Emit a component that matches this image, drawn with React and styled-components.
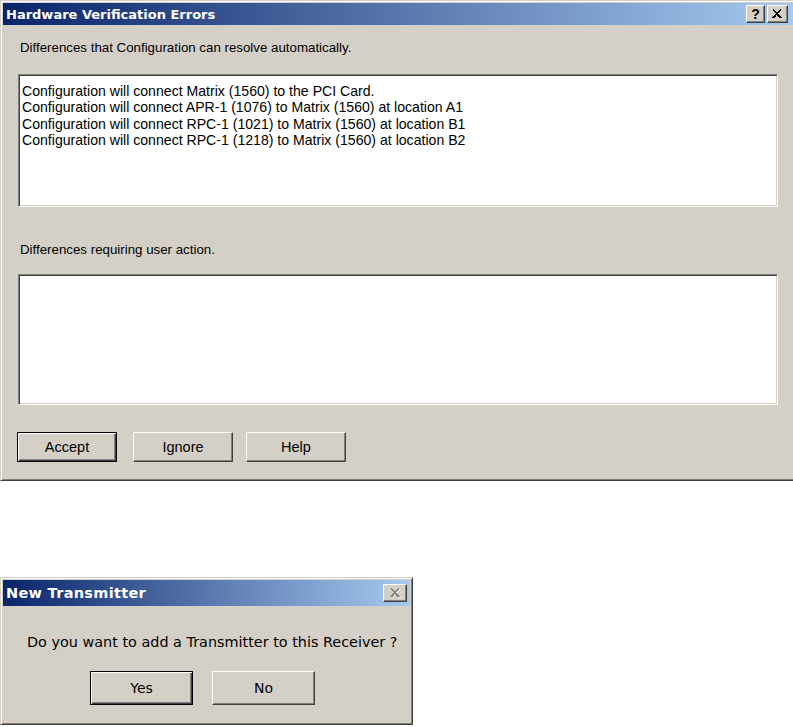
import React from "react";
import styled, { createGlobalStyle } from "styled-components";

const GlobalStyle = createGlobalStyle`
  html, body {
    margin: 0;
    padding: 0;
    background: #ffffff;
    overflow: hidden;
  }
  body {
    font-family: "Liberation Sans", Arial, sans-serif;
  }
`;

const Page = styled.div`
  display: flex;
  flex-direction: column;
  align-items: flex-start;
  gap: 96px;
`;

const Window = styled.div`
  box-sizing: border-box;
  width: ${(p) => p.$width}px;
  background: #d4d0c8;
  border: 1px solid;
  border-color: #d4d0c8 #404040 #404040 #d4d0c8;
  box-shadow: inset 1px 1px #ffffff, inset -1px -1px #808080;
  padding: 2px;
  display: flex;
  flex-direction: column;
`;

const TitleBar = styled.div`
  height: ${(p) => p.$height}px;
  background: linear-gradient(to right, #0a246a, #a6caf0);
  display: flex;
  align-items: center;
  justify-content: space-between;
  padding: 0 3px 0 3px;
  color: #ffffff;
  font-family: "DejaVu Sans", Verdana, sans-serif;
  font-weight: bold;
  font-size: ${(p) => p.$size}px;
`;

const TitleText = styled.span`
  white-space: nowrap;
  letter-spacing: ${(p) => p.$spacing || 0}px;
`;

const CaptionGroup = styled.div`
  display: flex;
  gap: 2px;
  margin-right: 6px;
`;

const CaptionButton = styled.div`
  box-sizing: border-box;
  width: ${(p) => p.$w}px;
  height: ${(p) => p.$h}px;
  background: #d4d0c8;
  border: 1px solid;
  border-color: #ffffff #404040 #404040 #ffffff;
  box-shadow: inset -1px -1px #808080;
  display: flex;
  align-items: center;
  justify-content: center;
  color: #000;
  font-family: "Liberation Sans", Arial, sans-serif;
  font-weight: bold;
  font-size: 14px;
  line-height: 1;
`;

const Content = styled.div`
  display: flex;
  flex-direction: column;
  padding: ${(p) => p.$pad};
`;

const Label = styled.div`
  font-size: 13.3px;
  line-height: 16px;
  color: #000;
  margin: ${(p) => p.$margin};
  white-space: nowrap;
`;

const ListBox = styled.div`
  box-sizing: border-box;
  width: 760px;
  height: ${(p) => p.$height}px;
  background: #ffffff;
  border: 1px solid;
  border-color: #808080 #ffffff #ffffff #808080;
  box-shadow: inset 1px 1px #404040, inset -1px -1px #d4d0c8;
  padding: 8px 3px;
  margin: ${(p) => p.$margin};
`;

const ListItem = styled.div`
  font-size: 14.1px;
  line-height: 16.3px;
  color: #000;
  white-space: nowrap;
`;

const ButtonRow = styled.div`
  display: flex;
  margin: ${(p) => p.$margin};
`;

const PushButton = styled.button`
  box-sizing: border-box;
  width: ${(p) => p.$w}px;
  height: ${(p) => p.$h}px;
  margin-right: ${(p) => p.$gap || 0}px;
  background: #d4d0c8;
  border: 1px solid;
  border-color: ${(p) =>
    p.$default ? "#000 #000 #000 #000" : "#ffffff #404040 #404040 #ffffff"};
  box-shadow: ${(p) =>
    p.$default
      ? "inset 1px 1px #ffffff, inset -1px -1px #404040, inset -2px -2px #808080"
      : "inset -1px -1px #808080"};
  font-family: ${(p) =>
    p.$tahoma ? '"DejaVu Sans", Verdana, sans-serif' : '"Liberation Sans", Arial, sans-serif'};
  font-size: ${(p) => (p.$tahoma ? 14 : 14.5)}px;
  color: #000;
  padding: 0;
  cursor: default;
`;

const Message = styled.div`
  font-family: "DejaVu Sans", Verdana, sans-serif;
  font-size: 14.4px;
  line-height: 18px;
  color: #000;
  white-space: nowrap;
  margin: ${(p) => p.$margin};
`;

const CloseGlyph = ({ disabled }) => (
  <svg width="11" height="10" viewBox="0 0 11 10" shapeRendering="crispEdges">
    {disabled && (
      <g transform="translate(1,1)" stroke="#ffffff" strokeWidth="1.6">
        <line x1="1" y1="0.5" x2="9" y2="9" />
        <line x1="9" y1="0.5" x2="1" y2="9" />
      </g>
    )}
    <g stroke={disabled ? "#808080" : "#000"} strokeWidth="1.7">
      <line x1="1" y1="0.5" x2="9" y2="9" />
      <line x1="9" y1="0.5" x2="1" y2="9" />
    </g>
  </svg>
);

const autoItems = [
  "Configuration will connect Matrix (1560) to the PCI Card.",
  "Configuration will connect APR-1 (1076) to Matrix (1560) at location A1",
  "Configuration will connect RPC-1 (1021) to Matrix (1560) at location B1",
  "Configuration will connect RPC-1 (1218) to Matrix (1560) at location B2",
];

const App = () => {
  return (
    <>
      <GlobalStyle />
      <Page>
        <Window $width={800}>
          <TitleBar $height={22} $size={13}>
            <TitleText>Hardware Verification Errors</TitleText>
            <CaptionGroup>
              <CaptionButton $w={19} $h={18}>?</CaptionButton>
              <CaptionButton $w={21} $h={18}>
                <CloseGlyph />
              </CaptionButton>
            </CaptionGroup>
          </TitleBar>
          <Content $pad="0 0 16px 15px">
            <Label $margin="15px 0 18px 2px">
              Differences that Configuration can resolve automatically.
            </Label>
            <ListBox $height={133} $margin="0">
              {autoItems.map((t) => (
                <ListItem key={t}>{t}</ListItem>
              ))}
            </ListBox>
            <Label $margin="35px 0 16px 2px">Differences requiring user action.</Label>
            <ListBox $height={131} $margin="0" />
            <ButtonRow $margin="27px 0 0 -1px">
              <PushButton $w={100} $h={30} $gap={16} $default>
                Accept
              </PushButton>
              <PushButton $w={100} $h={30} $gap={13}>
                Ignore
              </PushButton>
              <PushButton $w={100} $h={30}>
                Help
              </PushButton>
            </ButtonRow>
          </Content>
        </Window>

        <Window $width={413}>
          <TitleBar $height={26} $size={14.5}>
            <TitleText $spacing={0.3}>New Transmitter</TitleText>
            <CaptionButton $w={24} $h={18}>
              <CloseGlyph disabled />
            </CaptionButton>
          </TitleBar>
          <Content $pad="0 0 17px 0">
            <Message $margin="27px 0 20px 24px">
              Do you want to add a Transmitter to this Receiver ?
            </Message>
            <ButtonRow $margin="0 0 0 87px">
              <PushButton $w={103} $h={34} $gap={19} $default $tahoma>
                Yes
              </PushButton>
              <PushButton $w={103} $h={34} $tahoma>
                No
              </PushButton>
            </ButtonRow>
          </Content>
        </Window>
      </Page>
    </>
  );
};

export default App;
